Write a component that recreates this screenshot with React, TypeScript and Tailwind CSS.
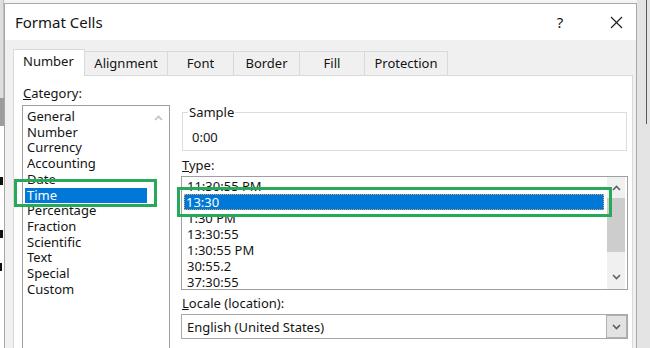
import React from "react";

const Chevron = ({ dir, color }: { dir: "up" | "down"; color: string }) => (
  <svg width="9" height="6" viewBox="0 0 9 6">
    {dir === "up" ? (
      <polyline points="1,5 4.5,1.5 8,5" fill="none" stroke={color} strokeWidth="1.6" />
    ) : (
      <polyline points="1,1 4.5,4.5 8,1" fill="none" stroke={color} strokeWidth="1.6" />
    )}
  </svg>
);

const categories = [
  "General",
  "Number",
  "Currency",
  "Accounting",
  "Date",
  "Time",
  "Percentage",
  "Fraction",
  "Scientific",
  "Text",
  "Special",
  "Custom",
];

const types = ["11:30:55 PM", "13:30", "1:30 PM", "13:30:55", "1:30:55 PM", "30:55.2", "37:30:55"];

export default function App() {
  return (
    <div className="relative w-[650px] h-[348px] overflow-hidden flex bg-white text-[#141414] font-['Noto_Sans','Open_Sans',sans-serif]">
      {/* left background strip */}
      <div className="w-[4px] h-full flex flex-col shrink-0 overflow-hidden">
        <div className="h-[98px] bg-[#dedede] border-r border-[#bdbdbd]"></div>
        <div className="h-[28px] bg-[#9c9c9c]"></div>
        <div className="flex-1 bg-white relative">
          <div className="h-[51px]"></div>
          <div className="w-[3px] h-[8px] bg-[#111]"></div>
          <div className="h-[45px]"></div>
          <div className="w-[3px] h-[8px] bg-[#111]"></div>
          <div className="h-[25px]"></div>
          <div className="w-[2px] h-[8px] bg-[#111]"></div>
        </div>
      </div>

      {/* dialog */}
      <div className="w-[633px] h-full shrink-0 bg-[#f4f4f4] pt-[3px]">
        <div className="h-full flex flex-col border-l border-t border-r border-[#a8a8a8]">
          <div className="h-[36px] bg-white flex items-center pl-[10px] shrink-0">
            <span className="text-[15px] leading-[20px]">Format Cells</span>
            <div className="flex-1"></div>
            <span className="text-[15px] leading-[20px] w-[12px] text-center">?</span>
            <div className="w-[44px]"></div>
            <svg width="13" height="13" viewBox="0 0 13 13" className="mr-[13px]">
              <line x1="1" y1="1" x2="12" y2="12" stroke="#1a1a1a" strokeWidth="1.1" />
              <line x1="12" y1="1" x2="1" y2="12" stroke="#1a1a1a" strokeWidth="1.1" />
            </svg>
          </div>

          <div className="flex-1 bg-[#f0f0f0] pl-[8px] pr-[3px] pt-[9px] flex flex-col">
            {/* tabs */}
            <div className="flex items-end h-[26px] text-[13px] shrink-0">
              <div className="relative z-10 w-[72px] h-[27px] mb-[-1px] bg-white border border-b-0 border-[#d9d9d9] flex items-center pl-[9px] pb-[2px]">
                Number
              </div>
              <div className="w-[83px] h-[24px] border-t border-r border-[#d9d9d9] flex items-center justify-center">
                Alignment
              </div>
              <div className="w-[66px] h-[24px] border-t border-r border-[#d9d9d9] flex items-center justify-center">
                Font
              </div>
              <div className="w-[66px] h-[24px] border-t border-r border-[#d9d9d9] flex items-center justify-center">
                Border
              </div>
              <div className="w-[65px] h-[24px] border-t border-r border-[#d9d9d9] flex items-center justify-center">
                Fill
              </div>
              <div className="w-[83px] h-[24px] border-t border-r border-[#d9d9d9] flex items-center justify-center">
                Protection
              </div>
            </div>

            {/* panel */}
            <div className="flex-1 bg-white border border-b-0 border-[#d9d9d9] flex pl-[8px] text-[13px] leading-[16px]">
              {/* left column */}
              <div className="w-[148px] shrink-0 flex flex-col pt-[9px]">
                <div className="pl-[1px]">
                  <span className="underline">C</span>ategory:
                </div>
                <div className="mt-[4px] h-[260px] border border-[#a0a0a0] flex">
                  <div className="flex-1 pt-[3px] leading-[15.7px]">
                    {categories.map((c) =>
                      c === "Time" ? (
                        <div key={c} className="ml-[2px] mr-[1px] pl-[2px] bg-[#0078d7] text-white">
                          {c}
                        </div>
                      ) : (
                        <div key={c} className="pl-[4px]">
                          {c}
                        </div>
                      )
                    )}
                  </div>
                  <div className="w-[21px] flex justify-center pt-[9px]">
                    <div className="h-[6px] flex">
                      <Chevron dir="up" color="#c2c2c2" />
                    </div>
                  </div>
                </div>
              </div>

              {/* right column */}
              <div className="ml-[11px] w-[447px] shrink-0 flex flex-col pt-[28px]">
                <fieldset className="ml-[1px] w-[445px] border border-[#dcdcdc] pl-[9px] pb-[5px]">
                  <legend className="ml-[-4px] px-[1px]">Sample</legend>
                  <div className="pt-[9px]">0:00</div>
                </fieldset>
                <div className="mt-[6px] ml-[1px]">
                  <span className="underline">T</span>ype:
                </div>
                <div className="mt-[3px] h-[114px] border border-[#a0a0a0] flex overflow-hidden pr-[2px]">
                  <div className="flex-1 pt-[1px] overflow-hidden">
                    {types.map((t) =>
                      t === "13:30" ? (
                        <div key={t} className="ml-[2px] mr-[3px] pl-[1px] bg-[#0078d7] text-white border border-dotted border-[#d9a36b]">
                          <div className="mt-[-1px] mb-[-1px]">{t}</div>
                        </div>
                      ) : (
                        <div key={t} className="pl-[5px]">
                          {t}
                        </div>
                      )
                    )}
                  </div>
                  <div className="w-[18px] flex flex-col bg-[#f0f0f0]">
                    <div className="h-[21px] flex items-center justify-center">
                      <Chevron dir="up" color="#606060" />
                    </div>
                    <div className="h-[54px] bg-[#cdcdcd]"></div>
                    <div className="flex-1"></div>
                    <div className="h-[24px] flex items-center justify-center">
                      <Chevron dir="down" color="#606060" />
                    </div>
                  </div>
                </div>
                <div className="mt-[5px] ml-[1px]">
                  <span className="underline">L</span>ocale (location):
                </div>
                <div className="mt-[3px] h-[25px] border border-[#a8a8a8] flex items-center pl-[5px]">
                  <span className="flex-1">English (United States)</span>
                  <div className="w-[21px] h-[23px] bg-[#e3e3e3] border border-[#b0b0b0] flex items-center justify-center">
                    <Chevron dir="down" color="#5a5a5a" />
                  </div>
                </div>
              </div>
            </div>
          </div>
        </div>
      </div>

      {/* right background strip */}
      <div className="flex-1 h-full bg-[#e4e4e4] flex">
        <div className="w-[9px]"></div>
        <div className="w-[1px] h-[124px] bg-[#5a5a5a]"></div>
      </div>

      {/* green annotation boxes */}
      <div className="absolute left-[14px] top-[179px] w-[143px] h-[28px] border-[3px] border-[#27a95a]"></div>
      <div className="absolute left-[177px] top-[187px] w-[435px] h-[30px] border-[3px] border-[#27a95a]"></div>
    </div>
  );
}
